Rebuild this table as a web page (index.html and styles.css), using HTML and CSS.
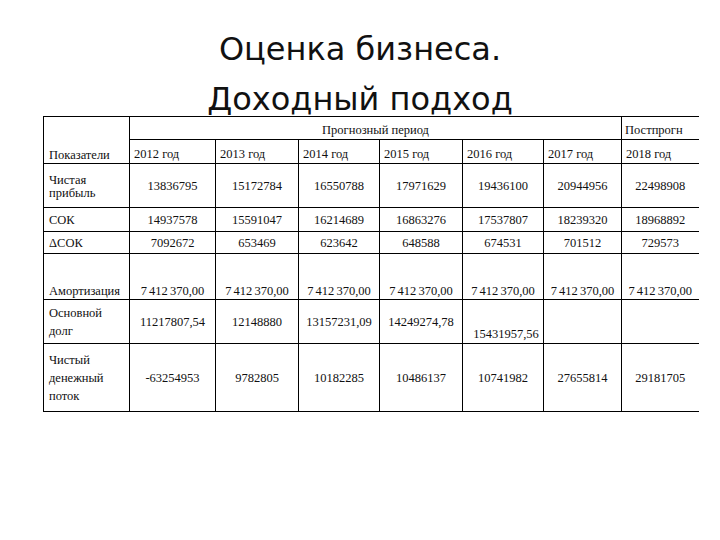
FILE: index.html
```html
<!DOCTYPE html>
<html lang="ru">
<head>
<meta charset="utf-8">
<title>Оценка бизнеса. Доходный подход</title>
<link rel="stylesheet" href="styles.css">
</head>
<body>
<h1 class="title">Оценка бизнеса.<br>Доходный подход</h1>
<table class="grid">
  <colgroup>
    <col class="c0"><col class="c1"><col class="c2"><col class="c3"><col class="c4"><col class="c5"><col class="c6"><col class="c7">
  </colgroup>
  <tr class="h1row">
    <td class="label bottom" rowspan="2">Показатели</td>
    <td class="period" colspan="6">Прогнозный период</td>
    <td class="post">Постпрогн</td>
  </tr>
  <tr class="h2row">
    <td class="year">2012 год</td>
    <td class="year">2013 год</td>
    <td class="year">2014 год</td>
    <td class="year">2015 год</td>
    <td class="year">2016 год</td>
    <td class="year">2017 год</td>
    <td class="year">2018 год</td>
  </tr>
  <tr class="r-profit">
    <td class="label tight">Чистая<br>прибыль</td>
    <td>13836795</td><td>15172784</td><td>16550788</td><td>17971629</td><td>19436100</td><td>20944956</td><td>22498908</td>
  </tr>
  <tr class="r-sok">
    <td class="label">СОК</td>
    <td>14937578</td><td>15591047</td><td>16214689</td><td>16863276</td><td>17537807</td><td>18239320</td><td>18968892</td>
  </tr>
  <tr class="r-dsok">
    <td class="label">ΔСОК</td>
    <td>7092672</td><td>653469</td><td>623642</td><td>648588</td><td>674531</td><td>701512</td><td>729573</td>
  </tr>
  <tr class="r-amort">
    <td class="label bottom">Амортизация</td>
    <td class="bottom amount">7 412 370,00</td><td class="bottom amount">7 412 370,00</td><td class="bottom amount">7 412 370,00</td><td class="bottom amount">7 412 370,00</td><td class="bottom amount">7 412 370,00</td><td class="bottom amount">7 412 370,00</td><td class="bottom amount">7 412 370,00</td>
  </tr>
  <tr class="r-debt">
    <td class="label loose">Основной<br>долг</td>
    <td>11217807,54</td><td>12148880</td><td>13157231,09</td><td>14249274,78</td><td class="bottom shift">15431957,56</td><td></td><td></td>
  </tr>
  <tr class="r-flow">
    <td class="label loose">Чистый<br>денежный<br>поток</td>
    <td>-63254953</td><td>9782805</td><td>10182285</td><td>10486137</td><td>10741982</td><td>27655814</td><td>29181705</td>
  </tr>
</table>
</body>
</html>
```

FILE: styles.css
```css
html, body {
  margin: 0;
  padding: 0;
  background: #ffffff;
}

.title {
  margin: 0;
  padding-top: 24px;
  height: 92px;
  font-family: "DejaVu Sans", Verdana, sans-serif;
  font-weight: normal;
  font-size: 32px;
  line-height: 50px;
  color: #111111;
  text-align: center;
  box-sizing: content-box;
}

.grid {
  margin-left: 43px;
  border-collapse: collapse;
  table-layout: fixed;
  width: 655px;
  font-family: "Liberation Serif", "Times New Roman", serif;
  font-size: 12.5px;
  color: #111111;
  border-top: 1px solid #000;
  border-bottom: 1px solid #000;
  border-left: 1px solid #000;
}

.c0 { width: 86px; }
.c1 { width: 86px; }
.c2 { width: 83px; }
.c3 { width: 81px; }
.c4 { width: 83px; }
.c5 { width: 81px; }
.c6 { width: 78px; }
.c7 { width: 77px; }

.grid td {
  border: 1px solid #000;
  padding: 0 2px;
  text-align: center;
  vertical-align: middle;
  white-space: nowrap;
  line-height: 14px;
}

.grid tr td:last-child {
  border-right: none;
}

.h1row { height: 23px; }
.h2row { height: 24px; }
.r-profit { height: 44px; }
.r-sok { height: 24px; }
.r-dsok { height: 22px; }
.r-amort { height: 46px; }
.r-debt { height: 44px; }
.r-flow { height: 68px; }

.grid td.label {
  text-align: left;
  padding-left: 5px;
}

.grid td.bottom {
  vertical-align: bottom;
  padding-bottom: 1px;
}

.grid td.amount {
  word-spacing: -1px;
}

.grid td.tight {
  line-height: 13px;
  vertical-align: top;
  padding-top: 10px;
}

.grid td.loose {
  line-height: 18px;
}

.grid td.period {
  padding-top: 4px;
}

.grid td.post {
  text-align: left;
  padding-left: 3px;
  vertical-align: bottom;
  padding-bottom: 2px;
}

.grid td.year {
  text-align: left;
  padding-left: 4px;
  vertical-align: bottom;
  padding-bottom: 2px;
}

.grid td.shift {
  padding-left: 8px;
  padding-bottom: 2px;
}
```
